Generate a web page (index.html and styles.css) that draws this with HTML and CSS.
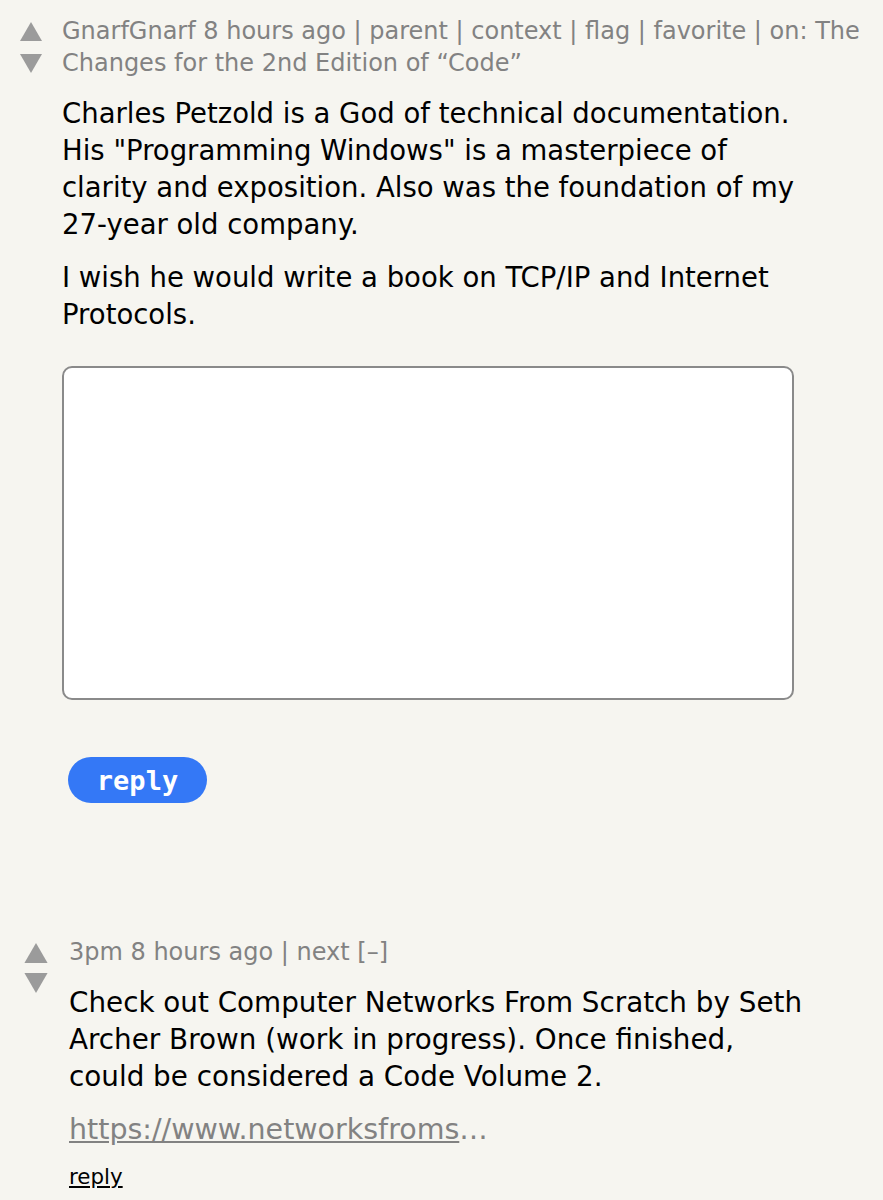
FILE: index.html
```html
<!DOCTYPE html>
<html>
<head>
<meta charset="utf-8">
<link rel="stylesheet" href="styles.css">
</head>
<body>
<div class="page">
  <div class="comment c1">
    <div class="votes">
      <svg class="arrow" viewBox="0 0 22 19"><polygon points="11,0 22,19 0,19" fill="#9b9b9b"/></svg>
      <svg class="arrow" viewBox="0 0 22 19"><polygon points="0,0 22,0 11,19" fill="#9b9b9b"/></svg>
    </div>
    <div class="content">
      <div class="head">GnarfGnarf 8 hours ago | parent | context | flag | favorite | on: The Changes for the 2nd Edition of “Code”</div>
      <div class="text">
        <p>Charles Petzold is a God of technical documentation. His "Programming Windows" is a masterpiece of clarity and exposition. Also was the foundation of my 27-year old company.</p>
        <p>I wish he would write a book on TCP/IP and Internet Protocols.</p>
      </div>
      <div class="reply-form">
        <div class="textarea"></div>
        <button class="reply-btn">reply</button>
      </div>
    </div>
  </div>
  <div class="comment c2">
    <div class="votes">
      <svg class="arrow" viewBox="0 0 22 19"><polygon points="11,0 22,19 0,19" fill="#9b9b9b"/></svg>
      <svg class="arrow" viewBox="0 0 22 19"><polygon points="0,0 22,0 11,19" fill="#9b9b9b"/></svg>
    </div>
    <div class="content">
      <div class="head">3pm 8 hours ago | next [–]</div>
      <div class="text">
        <p>Check out Computer Networks From Scratch by Seth Archer Brown (work in progress). Once finished, could be considered a Code Volume 2.</p>
        <p class="link-line"><a class="link" href="#">https://www.networksfroms</a><span class="ell">…</span></p>
      </div>
      <a class="reply-link" href="#">reply</a>
    </div>
  </div>
</div>
</body>
</html>
```
FILE: styles.css
```css
html, body {
  margin: 0;
  padding: 0;
  background: #f6f5f0;
}
body {
  font-family: "DejaVu Sans", Verdana, sans-serif;
  color: #000;
}
.comment {
  display: flex;
}
.c1 {
  padding: 20px 0 0 20px;
}
.c2 {
  padding: 138px 0 0 24px;
}
.votes {
  display: flex;
  flex-direction: column;
  flex: none;
}
.c1 .votes {
  width: 42px;
  gap: 13px;
  padding-top: 2px;
}
.c1 .arrow {
  width: 22px;
  height: 19px;
}
.c2 .votes {
  width: 45px;
  gap: 10px;
  padding-top: 2px;
}
.c2 .arrow {
  width: 24px;
  height: 20px;
}
.content {
  flex: 1;
  padding-right: 12px;
}
.head {
  font-size: 24px;
  line-height: 32px;
  color: #828282;
  margin-top: -5px;
}
.text {
  line-height: 37px;
  margin-top: 16px;
}
.c1 .text {
  font-size: 27.5px;
  max-width: 745px;
}
.c2 .text {
  font-size: 27.8px;
  max-width: 745px;
  margin-top: 16px;
}
.text p {
  margin: 0 0 16px 0;
}
.reply-form {
  margin-top: 33px;
}
.textarea {
  width: 728px;
  height: 330px;
  background: #fff;
  border: 2px solid #8a8a8a;
  border-radius: 10px;
}
.reply-btn {
  margin: 57px 0 0 6px;
  width: 139px;
  height: 46px;
  border: none;
  border-radius: 23px;
  background: #3478f6;
  color: #fff;
  font-family: "DejaVu Sans Mono", monospace;
  font-weight: bold;
  font-size: 27px;
  padding: 0;
}
.link-line {
  font-size: 28.5px;
}
.link {
  color: #828282;
  text-decoration: underline;
}
.ell {
  color: #828282;
}
.reply-link {
  display: inline-block;
  color: #000;
  font-size: 21.4px;
  text-decoration: underline;
}
```
